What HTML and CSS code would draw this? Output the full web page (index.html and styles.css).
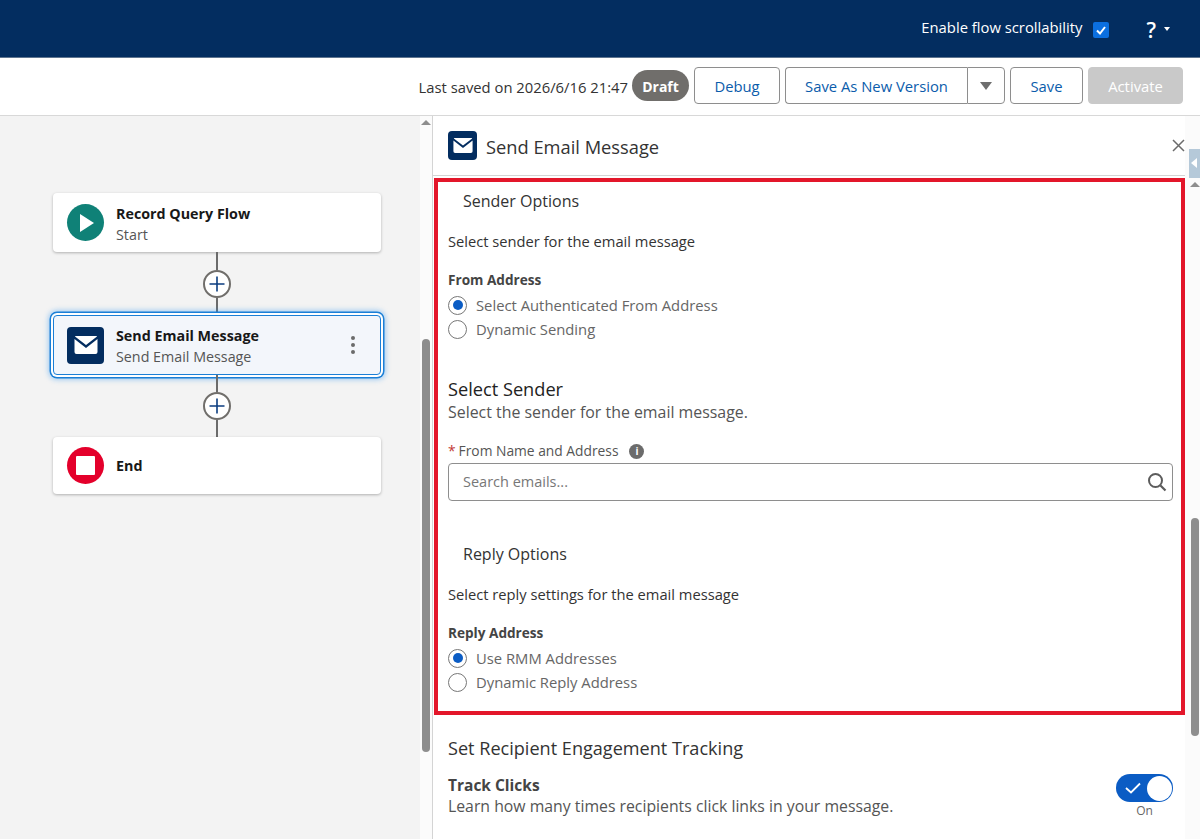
FILE: index.html
```html
<!DOCTYPE html>
<html lang="en">
<head>
<meta charset="UTF-8">
<meta name="viewport" content="width=device-width, initial-scale=1.0">
<title>Send Email Message</title>
<link rel="stylesheet" href="styles.css">
</head>
<body>
<header class="topbar">
    <span class="topbar-label">Enable flow scrollability</span>
    <span class="checkbox">
        <svg width="12" height="12" viewBox="0 0 12 12"><path d="M2 6.500 L5 9.500 L10 3" fill="none" stroke="#fff" stroke-width="2"/></svg>
    </span>
    <span class="help">?</span>
    <span class="help-caret"></span>
</header>
<div class="toolbar">
    <span class="saved">Last saved on 2026/6/16 21:47</span>
    <span class="badge">Draft</span>
    <button class="btn btn-debug">Debug</button>
    <div class="btn-group">
        <button class="btn btn-left">Save As New Version</button>
        <button class="btn btn-right"><span class="caret"></span></button>
    </div>
    <button class="btn btn-save">Save</button>
    <button class="btn btn-disabled">Activate</button>
</div>
<div class="main">
    <div class="canvas">
        <div class="stub"></div>
        <div class="node">
            <span class="node-icon round green">
                <svg width="16" height="20" viewBox="0 0 16 20"><path d="M1 1 L15 10 L1 19 Z" fill="#fff"/></svg>
            </span>
            <div class="node-text">
                <div class="node-title">Record Query Flow</div>
                <div class="node-sub">Start</div>
            </div>
        </div>
        <div class="line"></div>
        <div class="plus"><svg width="16" height="16" viewBox="0 0 16 16"><path d="M8 0.500 V15.500 M0.500 8 H15.500" stroke="#0b3d80" stroke-width="1.600"/></svg></div>
        <div class="line"></div>
        <div class="node node-active">
            <span class="node-icon square navy">
                <svg width="24" height="18" viewBox="0 0 24 18"><path d="M1.500 0 H22.500 Q23 0 23 .5 L12 9 L1 .5 Q1 0 1.500 0 Z M0.500 3 L12 12 L23.500 3 V16 Q23.500 18 21.500 18 H2.500 Q.5 18 .5 16 Z" fill="#fff"/></svg>
            </span>
            <div class="node-text">
                <div class="node-title">Send Email Message</div>
                <div class="node-sub">Send Email Message</div>
            </div>
            <span class="dots"><i></i><i></i><i></i></span>
        </div>
        <div class="line"></div>
        <div class="plus"><svg width="16" height="16" viewBox="0 0 16 16"><path d="M8 0.500 V15.500 M0.500 8 H15.500" stroke="#0b3d80" stroke-width="1.600"/></svg></div>
        <div class="line"></div>
        <div class="node node-end">
            <span class="node-icon round red"><span class="stop"></span></span>
            <div class="node-title">End</div>
        </div>
    </div>
    <div class="scroll scroll-left"><span class="arrow"></span><span class="thumb thumb-left"></span></div>
    <div class="panel">
        <div class="panel-head">
            <span class="panel-icon">
                <svg width="20" height="15" viewBox="0 0 24 18"><path d="M1.500 0 H22.500 Q23 0 23 .5 L12 9 L1 .5 Q1 0 1.500 0 Z M0.500 3 L12 12 L23.500 3 V16 Q23.500 18 21.500 18 H2.500 Q.5 18 .5 16 Z" fill="#fff"/></svg>
            </span>
            <h1 class="panel-title">Send Email Message</h1>
            <svg class="close" width="13" height="13" viewBox="0 0 13 13"><path d="M1 1 L12 12 M12 1 L1 12" stroke="#6b6b6b" stroke-width="1.500"/></svg>
        </div>
        <div class="highlight">
            <h2 class="opt-title">Sender Options</h2>
            <p class="opt-desc">Select sender for the email message</p>
            <div class="field-label">From Address</div>
            <label class="radio"><span class="dot on"></span>Select Authenticated From Address</label>
            <label class="radio"><span class="dot"></span>Dynamic Sending</label>
            <h2 class="sub-title">Select Sender</h2>
            <p class="sub-desc">Select the sender for the email message.</p>
            <div class="req-label"><span class="req">*</span>From Name and Address<span class="info">i</span></div>
            <div class="search">
                <span>Search emails...</span>
                <svg width="20" height="20" viewBox="0 0 20 20"><circle cx="8.500" cy="8.500" r="6.500" fill="none" stroke="#5c5c5c" stroke-width="2"/><path d="M13.500 13.500 L18.500 18.500" stroke="#5c5c5c" stroke-width="2.200"/></svg>
            </div>
            <h2 class="opt-title opt-second">Reply Options</h2>
            <p class="opt-desc">Select reply settings for the email message</p>
            <div class="field-label">Reply Address</div>
            <label class="radio"><span class="dot on"></span>Use RMM Addresses</label>
            <label class="radio"><span class="dot"></span>Dynamic Reply Address</label>
        </div>
        <div class="tracking">
            <h2 class="track-title">Set Recipient Engagement Tracking</h2>
            <div class="track-row">
                <div>
                    <div class="track-name">Track Clicks</div>
                    <div class="track-desc">Learn how many times recipients click links in your message.</div>
                </div>
                <div class="toggle-wrap">
                    <span class="toggle">
                        <svg width="16" height="12" viewBox="0 0 16 12"><path d="M1 6 L6 10.500 L15 1.500" fill="none" stroke="#fff" stroke-width="1.800"/></svg>
                        <span class="knob"></span>
                    </span>
                    <span class="toggle-text">On</span>
                </div>
            </div>
        </div>
    </div>
    <div class="scroll scroll-right">
        <span class="collapse"></span>
        <span class="arrow"></span>
        <span class="thumb thumb-right"></span>
    </div>
</div>
</body>
</html>
```

FILE: styles.css
```css
* {
    box-sizing: border-box;
}
html, body {
    height: 100%;
}
body {
    margin: 0;
    overflow: hidden;
    font-family: "Open Sans", "Noto Sans", Arial, sans-serif;
    font-size: 14px;
    color: #3e3e3c;
    background: #fff;
}
.topbar {
    height: 58px;
    background: #032d60;
    border-bottom: 1px solid #5f7590;
    display: flex;
    align-items: center;
    justify-content: flex-end;
    padding-right: 30px;
    color: #fff;
}
.topbar-label {
    font-size: 14.800px;
    margin-bottom: 4px;
}
.checkbox {
    width: 16px;
    height: 16px;
    margin-left: 11px;
    margin-top: 3px;
    border-radius: 2px;
    background: #0b6fe0;
    display: flex;
    align-items: center;
    justify-content: center;
}
.help {
    margin-left: 37px;
    font-size: 21px;
    font-weight: 600;
    margin-top: 2px;
}
.help-caret {
    margin-left: 8px;
    border-left: 3.500px solid transparent;
    border-right: 3.500px solid transparent;
    border-top: 4px solid #fff;
}
.toolbar {
    height: 58px;
    border-bottom: 1px solid #d8d8d8;
    display: flex;
    align-items: center;
    justify-content: flex-end;
    padding-right: 17px;
    padding-bottom: 2px;
}
.saved {
    font-size: 14.800px;
    margin-right: 4px;
    margin-top: 2px;
    color: #333;
}
.badge {
    background: #706e6b;
    color: #fff;
    font-weight: 700;
    font-size: 14px;
    height: 31px;
    line-height: 33px;
    border-radius: 16px;
    margin-right: 5px;
    width: 57px;
    text-align: center;
}
.btn {
    height: 37px;
    font-family: inherit;
    font-size: 14.800px;
    color: #0b5cab;
    background: #fff;
    border: 1px solid #8e8e8e;
    border-radius: 4px;
    padding: 0;
}
.btn-debug {
    width: 86px;
    margin-right: 5px;
}
.btn-group {
    display: flex;
    margin-right: 5px;
}
.btn-left {
    width: 182px;
    border-radius: 4px 0 0 4px;
    border-right: 0;
}
.btn-right {
    width: 38px;
    border-radius: 0 4px 4px 0;
    display: flex;
    align-items: center;
    justify-content: center;
}
.caret {
    border-left: 6.500px solid transparent;
    border-right: 6.500px solid transparent;
    border-top: 8px solid #6e6e6e;
}
.btn-save {
    width: 73px;
    margin-right: 5px;
}
.btn-disabled {
    width: 95px;
    background: #c9c9c9;
    border-color: #c9c9c9;
    color: #fff;
}
.main {
    height: 723px;
    display: flex;
}
.canvas {
    width: 420px;
    background: #f3f3f3;
    display: flex;
    flex-direction: column;
    align-items: flex-start;
    padding-left: 53px;
}
.stub {
    height: 77px;
}
.node {
    width: 328px;
    height: 59px;
    background: #fff;
    border-radius: 4px;
    box-shadow: 0 1px 3px rgba(0, 0, 0, 0.28);
    display: flex;
    align-items: center;
    padding-left: 14px;
}
.node-active {
    height: 60px;
    background: #f3f6fb;
    border: 1px solid #1b7fd6;
    box-shadow: 0 0 0 2px #fff, 0 0 0 3.500px #1b7fd6, 0 0 5px 5px rgba(30, 140, 240, 0.35);
    padding-left: 13px;
}
.node-end {
    height: 57px;
}
.node-icon {
    width: 37px;
    height: 37px;
    flex: none;
    margin-right: 12px;
    display: flex;
    align-items: center;
    justify-content: center;
}
.node-text {
    padding-top: 2px;
}
.round {
    border-radius: 50%;
}
.square {
    border-radius: 4px;
}
.green {
    background: #0f8177;
}
.green svg {
    margin-left: 3px;
}
.navy {
    background: #032d60;
}
.red {
    background: #e4002b;
}
.stop {
    width: 19px;
    height: 19px;
    background: #fff;
    border-radius: 1px;
}
.node-title {
    font-size: 14.300px;
    font-weight: 700;
    color: #181818;
    line-height: 21px;
}
.node-sub {
    font-size: 14.300px;
    color: #555;
    line-height: 21px;
}
.dots {
    margin-left: auto;
    margin-right: 25px;
    display: flex;
    flex-direction: column;
    gap: 3px;
}
.dots i {
    width: 4px;
    height: 4px;
    border-radius: 50%;
    background: #6b6b6b;
}
.line {
    width: 2px;
    height: 18px;
    background: #6b6b6b;
    margin-left: 163px;
}
.plus + .line,
.node-active + .line {
    height: 17px;
}
.plus {
    width: 28px;
    height: 28px;
    margin-left: 150px;
    border-radius: 50%;
    border: 2px solid #706e6b;
    background: #fff;
    display: flex;
    align-items: center;
    justify-content: center;
}
.scroll {
    position: relative;
    background: #fbfbfb;
}
.scroll-left {
    width: 13px;
    border-right: 1px solid #d4d4d4;
}
.scroll-right {
    width: 15px;
}
.arrow {
    position: absolute;
    top: 4px;
    left: 1px;
    border-left: 5px solid transparent;
    border-right: 5px solid transparent;
    border-bottom: 5px solid #8e8e8e;
}
.scroll-right .arrow {
    top: 66px;
    left: 5px;
}
.thumb {
    position: absolute;
    background: #8e8e8e;
    border-radius: 4px;
    width: 8px;
}
.thumb-left {
    left: 2px;
    top: 223px;
    height: 413px;
}
.thumb-right {
    left: 6px;
    top: 402px;
    height: 218px;
}
.collapse {
    position: absolute;
    left: 4px;
    top: 33px;
    width: 11px;
    height: 29px;
    background: #b5c9d9;
}
.collapse::after {
    content: "";
    position: absolute;
    left: 2px;
    top: 9px;
    border-top: 5px solid transparent;
    border-bottom: 5px solid transparent;
    border-right: 6px solid #fff;
}
.panel {
    width: 752px;
    background: #fff;
}
.panel-head {
    height: 60px;
    border-bottom: 1px solid #d4d4d4;
    display: flex;
    align-items: center;
    padding-left: 15px;
}
.panel-icon {
    width: 29px;
    height: 29px;
    border-radius: 4px;
    background: #032d60;
    display: flex;
    align-items: center;
    justify-content: center;
    margin-right: 9px;
}
.panel-title {
    margin: 2px 0 0;
    font-size: 18.300px;
    font-weight: 400;
    color: #333;
}
.close {
    margin-left: auto;
}
.highlight {
    margin: 2px 0 0 1px;
    width: 751px;
    height: 537px;
    border: 4px solid #e3162a;
    padding: 7px 8px 0 10px;
}
.opt-title {
    margin: 0 0 0 15px;
    font-size: 16px;
    font-weight: 400;
    line-height: 24px;
    color: #333;
}
.opt-second {
    margin-top: 41px;
}
.opt-desc {
    margin: 18px 0 0;
    font-size: 14.700px;
    line-height: 20px;
    color: #333;
}
.field-label {
    margin-top: 19px;
    margin-bottom: 3px;
    font-size: 13.600px;
    font-weight: 700;
    line-height: 20px;
    color: #444;
}
.radio {
    display: flex;
    align-items: center;
    height: 24px;
    font-size: 14.800px;
    color: #666;
}
.dot {
    width: 19px;
    height: 19px;
    border: 1px solid #777;
    border-radius: 50%;
    margin-right: 9px;
    background: #fff;
    display: flex;
    align-items: center;
    justify-content: center;
}
.dot.on::after {
    content: "";
    width: 10px;
    height: 10px;
    border-radius: 50%;
    background: #0b5cc4;
}
.sub-title {
    margin: 36px 0 0;
    font-size: 18.200px;
    font-weight: 400;
    line-height: 24px;
    color: #222;
}
.sub-desc {
    margin: 0;
    font-size: 15.900px;
    line-height: 22px;
    color: #555;
}
.req-label {
    margin-top: 19px;
    display: flex;
    align-items: center;
    font-size: 13.800px;
    line-height: 18px;
    color: #555;
}
.req {
    color: #c23934;
    margin: 0 3px 0 0;
}
.info {
    width: 15px;
    height: 15px;
    margin-left: 11px;
    border-radius: 50%;
    background: #6b6b6b;
    color: #fff;
    font-size: 10px;
    font-weight: 700;
    text-align: center;
    line-height: 15px;
}
.search {
    margin-top: 3px;
    height: 38px;
    border: 1px solid #8e8e8e;
    border-radius: 4px;
    display: flex;
    align-items: center;
    justify-content: space-between;
    padding: 0 5px 0 14px;
    font-size: 14.500px;
    color: #777;
}
.search span {
    margin-bottom: 2px;
}
.tracking {
    padding: 20px 12px 0 15px;
}
.track-title {
    margin: 0;
    font-size: 18.100px;
    font-weight: 400;
    line-height: 26px;
    color: #333;
}
.track-row {
    display: flex;
    justify-content: space-between;
    margin-top: 14px;
}
.track-name {
    font-size: 15.500px;
    font-weight: 700;
    line-height: 20px;
    color: #444;
}
.track-desc {
    font-size: 15.800px;
    line-height: 22px;
    color: #555;
}
.toggle-wrap {
    display: flex;
    flex-direction: column;
    align-items: center;
    margin-top: -1px;
}
.toggle {
    width: 57px;
    height: 28px;
    border-radius: 14px;
    background: #0b5cc4;
    display: flex;
    align-items: center;
    justify-content: space-between;
    padding: 0 1px 0 9px;
}
.knob {
    width: 25px;
    height: 25px;
    border-radius: 50%;
    background: #fff;
}
.toggle-text {
    font-size: 12px;
    line-height: 17px;
    color: #666;
}
```
